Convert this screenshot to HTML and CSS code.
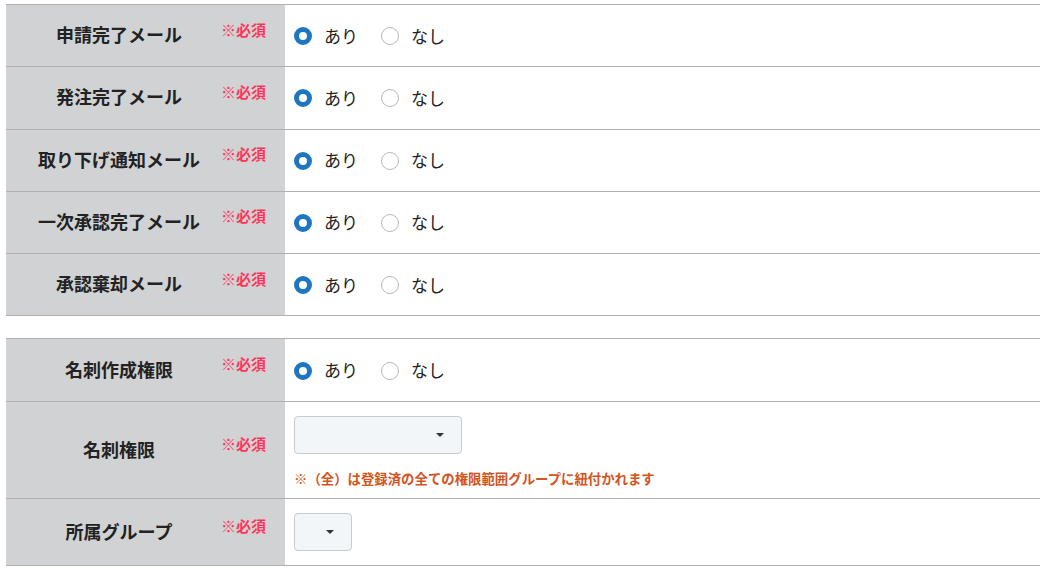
FILE: index.html
```html
<!DOCTYPE html>
<html lang="ja">
<head>
<meta charset="utf-8">
<link rel="stylesheet" href="styles.css">
</head>
<body>
<div class="page">
  <div class="table">
    <div class="row">
      <div class="th"><span class="label">申請完了メール</span><span class="req">※必須</span></div>
      <div class="td"><span class="radio on"></span><span class="opt">あり</span><span class="radio"></span><span class="opt">なし</span></div>
    </div>
    <div class="row">
      <div class="th"><span class="label">発注完了メール</span><span class="req">※必須</span></div>
      <div class="td"><span class="radio on"></span><span class="opt">あり</span><span class="radio"></span><span class="opt">なし</span></div>
    </div>
    <div class="row">
      <div class="th"><span class="label">取り下げ通知メール</span><span class="req">※必須</span></div>
      <div class="td"><span class="radio on"></span><span class="opt">あり</span><span class="radio"></span><span class="opt">なし</span></div>
    </div>
    <div class="row">
      <div class="th"><span class="label">一次承認完了メール</span><span class="req">※必須</span></div>
      <div class="td"><span class="radio on"></span><span class="opt">あり</span><span class="radio"></span><span class="opt">なし</span></div>
    </div>
    <div class="row">
      <div class="th"><span class="label">承認棄却メール</span><span class="req">※必須</span></div>
      <div class="td"><span class="radio on"></span><span class="opt">あり</span><span class="radio"></span><span class="opt">なし</span></div>
    </div>
  </div>

  <div class="table second">
    <div class="row r-a">
      <div class="th"><span class="label">名刺作成権限</span><span class="req">※必須</span></div>
      <div class="td"><span class="radio on"></span><span class="opt">あり</span><span class="radio"></span><span class="opt">なし</span></div>
    </div>
    <div class="row r-b">
      <div class="th"><span class="label">名刺権限</span><span class="req">※必須</span></div>
      <div class="td col">
        <div class="select wide"><span class="caret"></span></div>
        <div class="note">※（全）は登録済の全ての権限範囲グループに紐付かれます</div>
      </div>
    </div>
    <div class="row r-c">
      <div class="th"><span class="label">所属グループ</span><span class="req">※必須</span></div>
      <div class="td"><div class="select narrow"><span class="caret"></span></div></div>
    </div>
  </div>
</div>
</body>
</html>
```

FILE: styles.css
```css
* { box-sizing: border-box; }
html, body { margin: 0; padding: 0; background: #fff; }
body {
  font-family: "Noto Sans CJK JP", "Noto Sans", sans-serif;
  color: #222;
}
.page {
  padding: 4px 0 0 6px;
}
.table {
  border-top: 1px solid #b1b1b1;
}
.table.second {
  margin-top: 22px;
}
.row {
  display: grid;
  grid-template-columns: 279px 1fr;
  border-bottom: 1px solid #b1b1b1;
  height: 62.25px;
}
.row.r-a { height: 63px; }
.row.r-b { height: 97px; }
.row.r-c { height: 67px; }
.th {
  position: relative;
  background: #d1d2d4;
  display: flex;
  align-items: center;
  justify-content: center;
  padding-right: 53px;
  padding-bottom: 3px;
}
.label {
  font-size: 18px;
  font-weight: 700;
  color: #222;
  line-height: 1;
  white-space: nowrap;
}
.req {
  position: absolute;
  right: 19px;
  top: 50%;
  transform: translateY(-15px);
  font-size: 15px;
  font-weight: 700;
  color: #ff3558;
  line-height: 17px;
  white-space: nowrap;
}
.td {
  display: flex;
  align-items: center;
  padding-left: 9px;
}
.td.col {
  flex-direction: column;
  align-items: flex-start;
  justify-content: flex-start;
  padding-top: 14px;
}
.radio {
  width: 18px;
  height: 18px;
  border-radius: 50%;
  border: 1px solid #b9b9b9;
  background: #fff;
  flex: none;
  margin-top: 1px;
}
.radio.on {
  border: 5px solid #1e76c2;
}
.opt {
  font-size: 17px;
  color: #222;
  margin-left: 12px;
  margin-right: 23px;
  line-height: 1;
  padding-bottom: 1px;
}
.select {
  position: relative;
  height: 38px;
  background: #f3f6f9;
  border: 1px solid #c8ccd0;
  border-radius: 4px;
  flex: none;
}
.select.wide { width: 168px; }
.select.narrow { width: 58px; }
.caret {
  position: absolute;
  right: 17px;
  top: 16px;
  width: 0;
  height: 0;
  border-left: 4px solid transparent;
  border-right: 4px solid transparent;
  border-top: 4px solid #333;
}
.note {
  margin-top: 15px;
  font-size: 13.4px;
  font-weight: 700;
  line-height: 18px;
  color: #d4541f;
  white-space: nowrap;
}
```
